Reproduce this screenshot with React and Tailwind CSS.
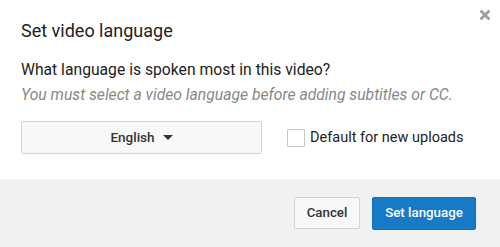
import React, { useState } from "react";

const CloseIcon = () => (
  <svg width="10" height="10" viewBox="0 0 10 10" className="block">
    <path d="M1.5 1.5 L8.5 8.5 M8.5 1.5 L1.5 8.5" stroke="#9e9e9e" strokeWidth="2.8" strokeLinecap="square" />
  </svg>
);

const LanguageDialog = () => {
  const [isDefault, setIsDefault] = useState(false);

  return (
    <div className="w-[500px] h-[247px] bg-white flex flex-col font-['Roboto',sans-serif] text-[#222]">
      <div className="flex-1 relative px-[21px] pt-[19px]">
        <button className="absolute right-[10px] top-[10px] p-0">
          <CloseIcon />
        </button>

        <h2 className="text-[18px] leading-[24px] text-[#222]">Set video language</h2>

        <p className="mt-[17px] text-[15.7px] leading-[20px] text-[#222]">
          What language is spoken most in this video?
        </p>
        <p className="mt-[5px] text-[15.7px] leading-[20px] italic text-[#888]">
          You must select a video language before adding subtitles or CC.
        </p>

        <div className="mt-[16px] flex items-center">
          <button className="w-[241px] h-[33px] flex items-center justify-center gap-[8px] bg-[#f8f8f8] border border-[#d3d3d3] rounded-[2px] text-[13.5px] font-medium text-[#333]">
            <span>English</span>
            <svg width="10" height="5" viewBox="0 0 10 5">
              <path d="M0 0 H10 L5 5 Z" fill="#333" />
            </svg>
          </button>

          <label className="ml-[25px] flex items-center gap-[5px] text-[14.5px] text-[#222] cursor-pointer">
            <span
              onClick={() => setIsDefault(!isDefault)}
              className="w-[18px] h-[18px] border border-[#c6c6c6] bg-white rounded-[1px]"
            />
            Default for new uploads
          </label>
        </div>
      </div>

      <div className="h-[68px] bg-[#f1f1f1] flex items-center justify-end gap-[12px] pr-[24px]">
        <button className="h-[32px] w-[66px] bg-[#f8f8f8] border border-[#d3d3d3] rounded-[2px] text-[13.3px] font-medium text-[#333]">
          Cancel
        </button>
        <button className="h-[33px] w-[104px] bg-[#167ac6] border border-[#126db3] rounded-[2px] text-[13.3px] font-medium text-white">
          Set language
        </button>
      </div>
    </div>
  );
};

export default function App() {
  return <LanguageDialog />;
}
